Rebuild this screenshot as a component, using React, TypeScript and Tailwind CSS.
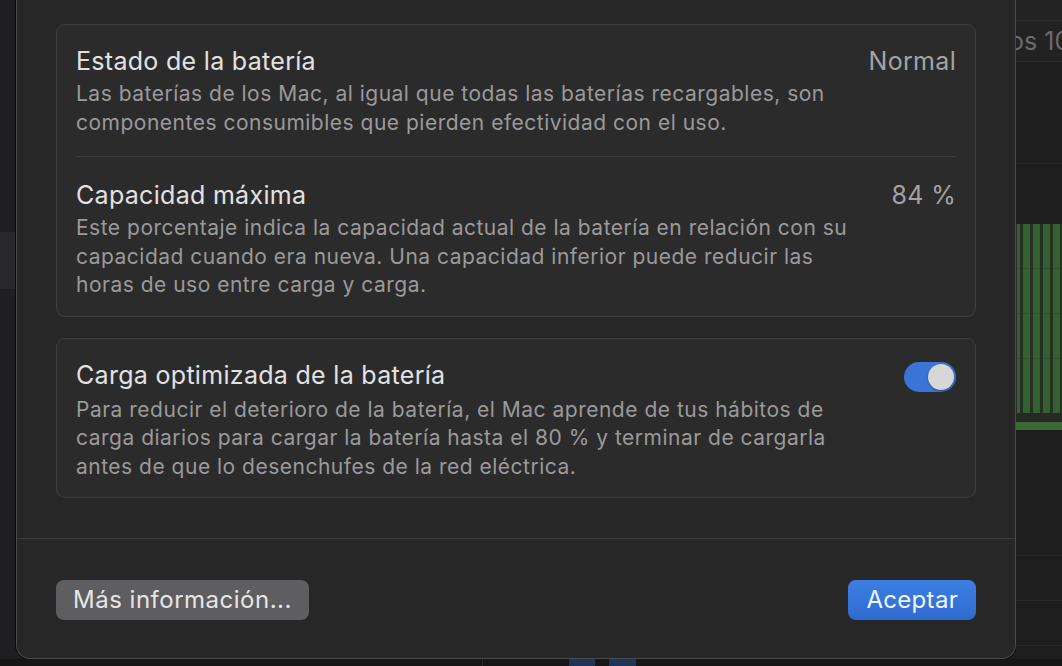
import { useState } from 'react';

const FONT = { fontFamily: 'Inter, "Noto Sans", sans-serif' };

function Toggle({ on, onChange }: { on: boolean; onChange: (v: boolean) => void }) {
  return (
    <button
      onClick={() => onChange(!on)}
      className={`flex h-[30px] w-[52px] shrink-0 items-center rounded-full p-[2px] ${
        on ? 'justify-end bg-[#3a74d6]' : 'justify-start bg-[#4a494b]'
      }`}
    >
      <span className="block h-[26px] w-[26px] rounded-full bg-[#d7d7d7] shadow-[0_1px_2px_rgba(0,0,0,0.35)]" />
    </button>
  );
}

function Section({ title, value, desc, right }: { title: string; value?: string; desc: string[]; right?: React.ReactNode }) {
  return (
    <div>
      <div className="flex items-start justify-between">
        <div className="text-[25px] leading-[30px] tracking-[0.3px] text-[#e2e2e2]">{title}</div>
        {value && <div className="text-[25px] leading-[30px] tracking-[0.3px] text-[#a3a3a3]">{value}</div>}
        {right}
      </div>
      <div className="mt-[4px] text-[21px] leading-[28.5px] tracking-[0.5px] text-[#9a9a9a]">
        {desc.map((l) => (
          <div key={l}>{l}</div>
        ))}
      </div>
    </div>
  );
}

function RightBackdrop() {
  return (
    <div className="flex h-full flex-1 flex-col overflow-hidden bg-[#1e1e1e]">
      <div className="h-[20px] bg-[#232323]" />
      <div className="h-[42px] overflow-hidden border-y border-[#2c2c2c] bg-[#222222] whitespace-nowrap">
        <div className="ml-[-7px] text-[25px] leading-[40px] text-[#6b6b6b]">os 10 días</div>
      </div>
      <div className="h-[102px] border-b border-[#292929]" />
      <div className="h-[60px]" />
      <div className="flex h-[189px] gap-[3px] bg-[#263024] pl-[1px]">
        {[3, 7, 7, 7, 7].map((w, i) => (
          <div key={i} className="flex h-full flex-col bg-[#35602f]" style={{ width: w }}>
            <div className="h-[45px] border-b border-[#2f5429]" />
            <div className="h-[45px] border-b border-[#2f5429]" />
            <div className="h-[45px] border-b border-[#2f5429]" />
          </div>
        ))}
      </div>
      <div className="h-[9px] bg-[#262925]" />
      <div className="h-[8px] bg-[#3a6a33]" />
      <div className="h-[125px]" />
      <div className="h-[45px] border-t border-[#2a2a2a]" />
      <div className="h-[45px] border-t border-[#2a2a2a]" />
      <div className="flex-1 border-t border-[#2a2a2a]" />
    </div>
  );
}

export default function App() {
  const [optimized, setOptimized] = useState(true);

  return (
    <div className="flex h-[666px] w-[1062px] flex-col overflow-hidden bg-[#1e1e20]" style={FONT}>
      <div className="flex h-[659px]">
        <div className="flex w-[16px] flex-col bg-[#1f1f22]">
          <div className="h-[232px]" />
          <div className="h-[57px] bg-[#29292c]" />
        </div>

        <div className="flex w-[1000px] flex-col rounded-b-[14px] border-x border-b border-[#4b4a4c] bg-[#282728] shadow-[0_0_0_1px_#0b0b0b]">
          <div className="flex flex-1 flex-col gap-[21px] px-[39px] pt-[24px]">
            <div className="rounded-[9px] border border-[#3e3d3f] bg-[#2c2b2c] px-[19px] pt-[21px] pb-[16px]">
              <Section
                title="Estado de la batería"
                value="Normal"
                desc={[
                  'Las baterías de los Mac, al igual que todas las baterías recargables, son',
                  'componentes consumibles que pierden efectividad con el uso.',
                ]}
              />
              <div className="mt-[19px] mb-[23px] h-px bg-[#3b3a3c]" />
              <Section
                title="Capacidad máxima"
                value="84 %"
                desc={[
                  'Este porcentaje indica la capacidad actual de la batería en relación con su',
                  'capacidad cuando era nueva. Una capacidad inferior puede reducir las',
                  'horas de uso entre carga y carga.',
                ]}
              />
            </div>

            <div className="rounded-[9px] border border-[#3e3d3f] bg-[#2c2b2c] px-[19px] pt-[21px] pb-[16px]">
              <Section
                title="Carga optimizada de la batería"
                desc={[
                  'Para reducir el deterioro de la batería, el Mac aprende de tus hábitos de',
                  'carga diarios para cargar la batería hasta el 80 % y terminar de cargarla',
                  'antes de que lo desenchufes de la red eléctrica.',
                ]}
                right={
                  <div className="pt-[2px]">
                    <Toggle on={optimized} onChange={setOptimized} />
                  </div>
                }
              />
            </div>
          </div>

          <div className="h-px bg-[#3c3b3d]" />

          <div className="flex items-center justify-between px-[39px] pt-[41px] pb-[38px]">
            <button className="h-[40px] rounded-[8px] bg-[#5e5d5f] px-[17px] text-[24px] tracking-[0.5px] text-[#e6e6e6]">
              Más información...
            </button>
            <button className="h-[40px] rounded-[8px] bg-gradient-to-b from-[#3c7ee2] to-[#2f6ccf] px-[18px] text-[24px] tracking-[0.3px] text-[#f2f5fb]">
              Aceptar
            </button>
          </div>
        </div>

        <RightBackdrop />
      </div>

      <div className="flex flex-1 bg-[#161616]">
        <div className="w-[482px]" />
        <div className="w-px bg-[#2a2a2a]" />
        <div className="w-[86px]" />
        <div className="w-[26px] bg-[#1f3456]" />
        <div className="w-[14px]" />
        <div className="w-[27px] bg-[#1f3456]" />
      </div>
    </div>
  );
}
